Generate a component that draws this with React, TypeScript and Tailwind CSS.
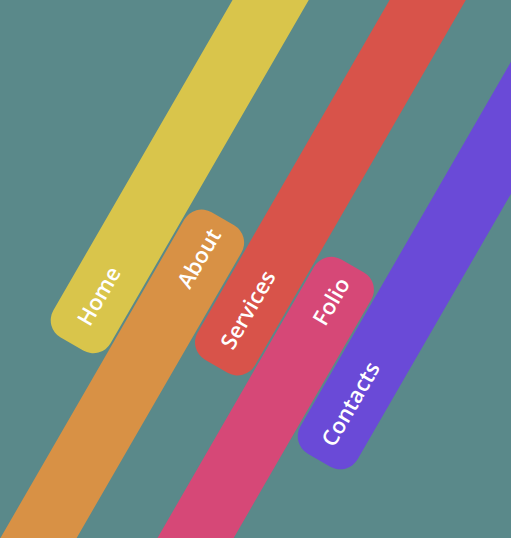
export default function App() {
  const font = { fontFamily: '"Open Sans", "Noto Sans", sans-serif' };
  return (
    <div className="relative w-[511px] h-[538px] overflow-hidden bg-[#5a898a]" style={font}>
      <div className="flex items-start gap-[2px] w-[338px] h-[800px] origin-top-left translate-x-[324.4px] -translate-y-[159.1px] rotate-[30deg]">
        {/* Home */}
        <div className="flex flex-col justify-end w-[66px] h-[562px] rounded-[20px] bg-[#d9c54b] shrink-0">
          <div className="flex h-[110px] items-center justify-center pr-[4px]">
            <span className="[writing-mode:vertical-rl] rotate-180 text-[22px] font-semibold text-white leading-none">Home</span>
          </div>
        </div>
        {/* About */}
        <div className="flex flex-col justify-start w-[66px] h-[422px] mt-[378px] rounded-[20px] bg-[#d89145] shrink-0">
          <div className="flex h-[92px] items-center justify-center pr-[4px]">
            <span className="[writing-mode:vertical-rl] rotate-180 text-[22px] font-semibold text-white leading-none">About</span>
          </div>
        </div>
        {/* Services */}
        <div className="flex flex-col justify-end w-[66px] h-[509px] rounded-[20px] bg-[#d8534a] shrink-0">
          <div className="flex h-[130px] items-center justify-center pr-[4px]">
            <span className="[writing-mode:vertical-rl] rotate-180 text-[22px] font-semibold text-white leading-none">Services</span>
          </div>
        </div>
        {/* Folio */}
        <div className="flex flex-col justify-start w-[66px] h-[446px] mt-[354px] rounded-[20px] bg-[#d64877] shrink-0">
          <div className="flex h-[82px] items-center justify-center pr-[4px]">
            <span className="[writing-mode:vertical-rl] rotate-180 text-[22px] font-semibold text-white leading-none">Folio</span>
          </div>
        </div>
        {/* Contacts */}
        <div className="flex flex-col justify-end w-[66px] h-[539px] rounded-[20px] bg-[#6a4ad7] shrink-0">
          <div className="flex h-[128px] items-center justify-center pr-[4px]">
            <span className="[writing-mode:vertical-rl] rotate-180 text-[22px] font-semibold text-white leading-none">Contacts</span>
          </div>
        </div>
      </div>
    </div>
  );
}
